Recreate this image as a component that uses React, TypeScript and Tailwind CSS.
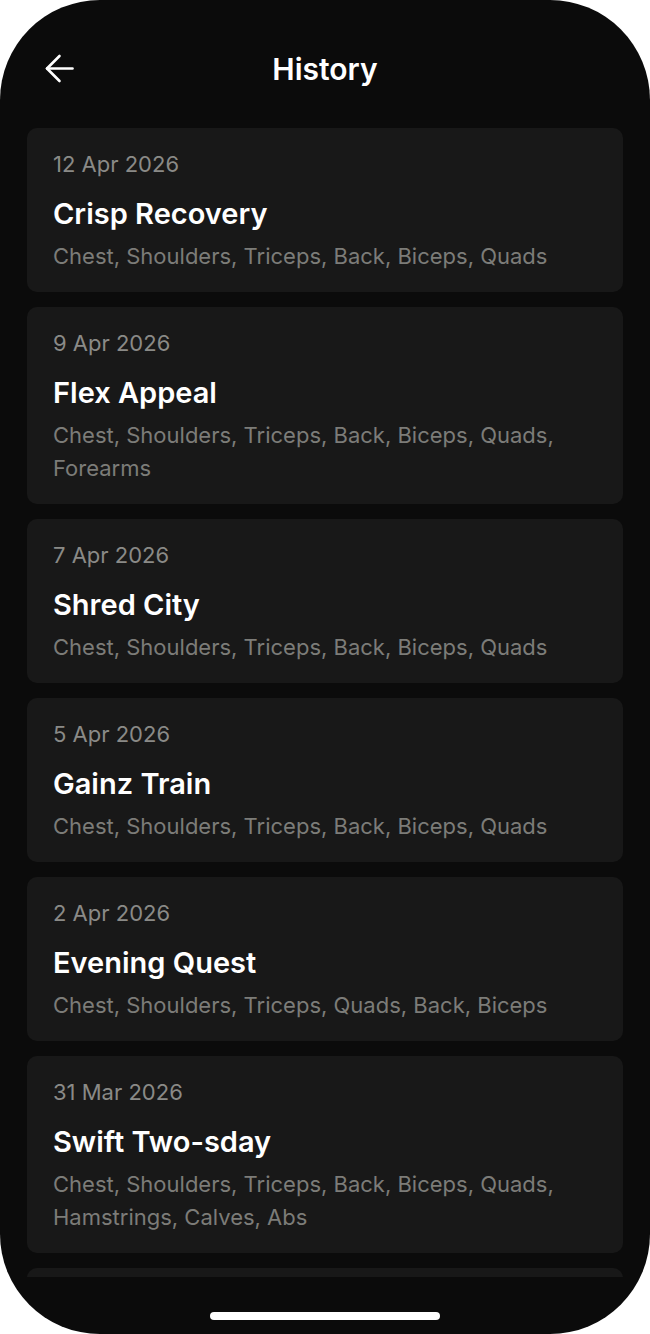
import React from "react";

const items = [
  { date: "12 Apr 2026", title: "Crisp Recovery", muscles: "Chest, Shoulders, Triceps, Back, Biceps, Quads" },
  { date: "9 Apr 2026", title: "Flex Appeal", muscles: "Chest, Shoulders, Triceps, Back, Biceps, Quads, Forearms" },
  { date: "7 Apr 2026", title: "Shred City", muscles: "Chest, Shoulders, Triceps, Back, Biceps, Quads" },
  { date: "5 Apr 2026", title: "Gainz Train", muscles: "Chest, Shoulders, Triceps, Back, Biceps, Quads" },
  { date: "2 Apr 2026", title: "Evening Quest", muscles: "Chest, Shoulders, Triceps, Quads, Back, Biceps" },
  { date: "31 Mar 2026", title: "Swift Two-sday", muscles: "Chest, Shoulders, Triceps, Back, Biceps, Quads, Hamstrings, Calves, Abs" },
];

export default function App() {
  return (
    <div className="w-[650px] h-[1334px] bg-white" style={{ fontFamily: "Inter, 'Noto Sans', sans-serif" }}>
      <div className="w-full h-full bg-[#0b0b0b] rounded-[100px] flex flex-col overflow-hidden">
        <div className="relative h-[128px] shrink-0">
          <svg className="absolute left-[45px] top-[54px]" width="29" height="29" viewBox="0 0 29 29" fill="none" stroke="white" strokeWidth="2.6" strokeLinecap="round" strokeLinejoin="round">
            <path d="M27.5 14.5H2" />
            <path d="M14.5 2L2 14.5L14.5 27" />
          </svg>
          <h1 className="pt-[52px] text-center text-white text-[30px] font-semibold leading-[34px]">History</h1>
        </div>
        <div className="flex-1 min-h-0 overflow-hidden px-[27px] flex flex-col gap-[15px]">
          {items.map((it) => (
            <div key={it.title} className="bg-[#181818] rounded-[10px] pl-[26px] pr-[20px] pt-[20px] pb-[19px] shrink-0">
              <div className="text-[22px] leading-[32px] text-[#8a8a87]">{it.date}</div>
              <div className="mt-[12px] text-[29px] leading-[44px] font-semibold text-white">{it.title}</div>
              <div className="mt-[4px] text-[22px] leading-[33px] text-[#7c7c78]">{it.muscles}</div>
            </div>
          ))}
          <div className="bg-[#181818] rounded-[10px] h-[164px] shrink-0" />
        </div>
        <div className="h-[57px] shrink-0 flex items-start justify-center pt-[35px]">
          <div className="w-[230px] h-[8px] rounded-full bg-white" />
        </div>
      </div>
    </div>
  );
}
